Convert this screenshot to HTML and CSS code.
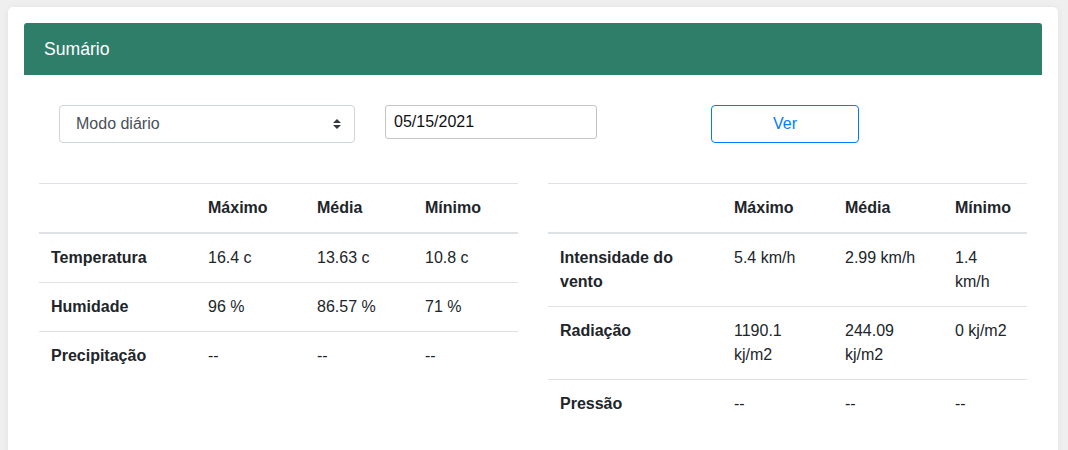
FILE: index.html
```html
<!DOCTYPE html>
<html lang="pt">
<head>
<meta charset="utf-8">
<title>Sumário</title>
<link rel="stylesheet" href="styles.css">
</head>
<body>
<div class="card">
  <div class="card-header">Sumário</div>
  <div class="controls">
    <div class="select">
      <span>Modo diário</span>
      <svg class="arrows" width="8" height="10" viewBox="0 0 4 5"><path d="M2 0L0 2h4zm0 5L0 3h4z" fill="#343a40"/></svg>
    </div>
    <input class="date" type="text" value="05/15/2021">
    <button class="btn">Ver</button>
  </div>
  <div class="tables">
    <div class="col">
      <table class="tbl tbl-left">
        <colgroup><col class="c1"><col class="c2"><col class="c3"><col class="c4"></colgroup>
        <thead><tr><th></th><th>Máximo</th><th>Média</th><th>Mínimo</th></tr></thead>
        <tbody>
          <tr><th>Temperatura</th><td>16.4 c</td><td>13.63 c</td><td>10.8 c</td></tr>
          <tr><th>Humidade</th><td>96 %</td><td>86.57 %</td><td>71 %</td></tr>
          <tr><th>Precipitação</th><td>--</td><td>--</td><td>--</td></tr>
        </tbody>
      </table>
    </div>
    <div class="col">
      <table class="tbl tbl-right">
        <colgroup><col class="c1"><col class="c2"><col class="c3"><col class="c4"></colgroup>
        <thead><tr><th></th><th>Máximo</th><th>Média</th><th>Mínimo</th></tr></thead>
        <tbody>
          <tr><th>Intensidade do vento</th><td>5.4 km/h</td><td>2.99 km/h</td><td>1.4 km/h</td></tr>
          <tr><th>Radiação</th><td>1190.1 kj/m2</td><td>244.09 kj/m2</td><td>0 kj/m2</td></tr>
          <tr><th>Pressão</th><td>--</td><td>--</td><td>--</td></tr>
        </tbody>
      </table>
    </div>
  </div>
</div>
</body>
</html>
```
FILE: styles.css
```css
* { box-sizing: border-box; }
html, body { margin: 0; height: 100%; }
body {
  background: #efefef;
  padding: 7px 10px 0 8px;
  font-family: "Liberation Sans", Arial, sans-serif;
  color: #212529;
  font-size: 16px;
  line-height: 1.5;
  overflow: hidden;
}
.card {
  background: #fff;
  border-radius: 5px;
  box-shadow: 0 0 6px rgba(0,0,0,0.06);
  padding: 16px 16px 40px;
  width: 1050px;
  min-height: 460px;
}
.card-header {
  background: #2e7e6a;
  color: #fff;
  height: 52px;
  border-radius: 3px 3px 0 0;
  padding: 0 20px;
  font-size: 17.6px;
  line-height: 52px;
}
.controls {
  display: flex;
  align-items: flex-start;
  margin-top: 30px;
}
.select {
  margin-left: 35px;
  width: 296px;
  height: 38px;
  border: 1px solid #ced4da;
  border-radius: 4px;
  display: flex;
  align-items: center;
  justify-content: space-between;
  padding: 0 13px 0 16px;
  color: #495057;
}
.arrows { display: block; }
.date {
  margin-left: 30px;
  width: 212px;
  height: 34px;
  border: 1px solid #c4c4c4;
  border-radius: 3px;
  padding: 0 8px;
  font-family: "Liberation Sans", Arial, sans-serif;
  font-size: 16px;
  color: #111;
  outline: none;
}
.btn {
  margin-left: 114px;
  width: 148px;
  height: 38px;
  border: 1px solid #007bff;
  border-radius: 4px;
  background: #fff;
  color: #007bff;
  font-family: "Liberation Sans", Arial, sans-serif;
  font-size: 16px;
}
.tables {
  display: flex;
  margin-top: 40px;
}
.col {
  width: 509px;
  padding: 0 15px;
}
.tbl {
  width: 100%;
  border-collapse: collapse;
  table-layout: fixed;
}
.tbl th, .tbl td {
  padding: 12px;
  text-align: left;
  vertical-align: top;
  border-top: 1px solid #dee2e6;
  line-height: 24px;
}
.tbl th { font-weight: bold; }
.tbl td { font-weight: normal; }
.tbl thead th {
  vertical-align: bottom;
  border-bottom: 2px solid #dee2e6;
}
.tbl-left .c1 { width: 157px; }
.tbl-left .c2 { width: 109px; }
.tbl-left .c3 { width: 108px; }
.tbl-left .c4 { width: 105px; }
.tbl-right .c1 { width: 174px; }
.tbl-right .c2 { width: 111px; }
.tbl-right .c3 { width: 110px; }
.tbl-right .c4 { width: 84px; }
```
